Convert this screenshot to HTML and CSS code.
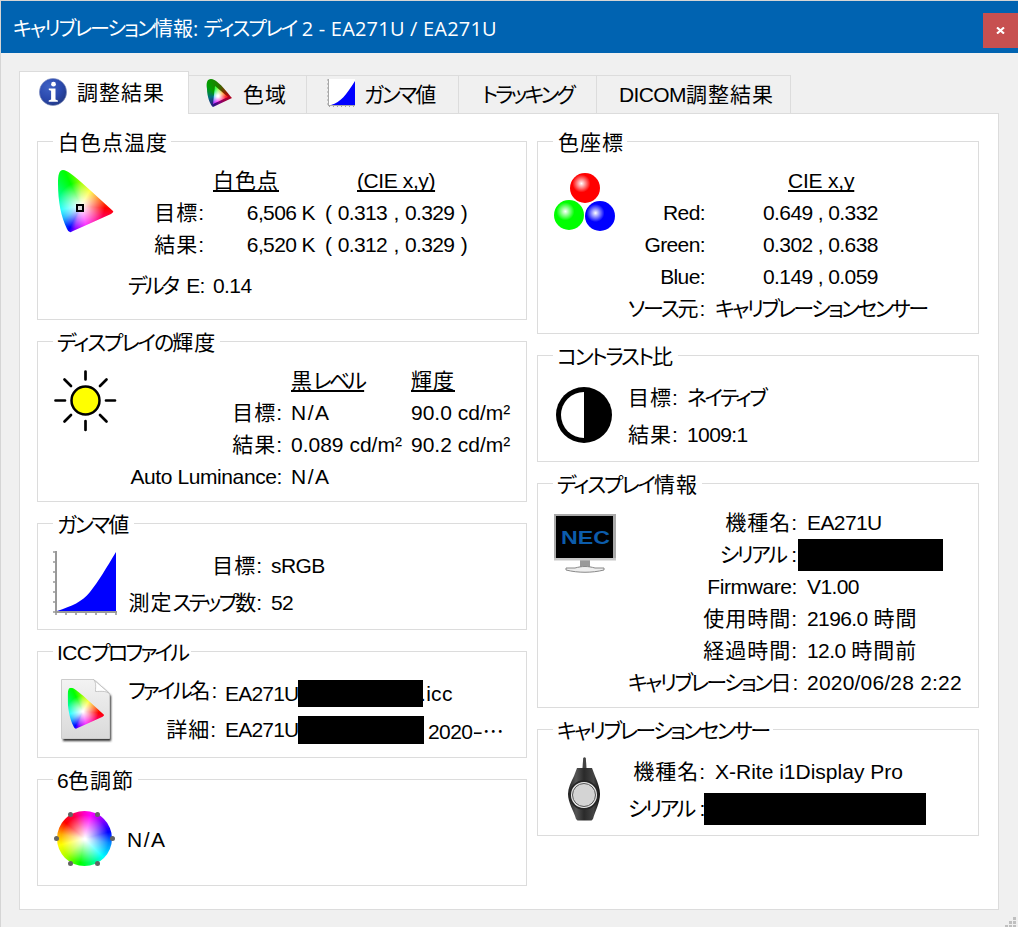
FILE: index.html
```html
<!DOCTYPE html>
<html lang="ja">
<head>
<meta charset="utf-8">
<title>キャリブレーション情報</title>
<link rel="stylesheet" href="styles.css">
</head>
<body>
<div class="window">
  <header class="titlebar">
    <h1><span class="tk">キャリブレーション</span>情報: <span class="tk">ディスプレイ</span><span class="tl"> 2 - EA271U / EA271U</span></h1>
    <button class="close" aria-label="閉じる"><svg width="9" height="7" viewBox="0 0 9 7"><path d="M1 .4 8 6.6M8 .4 1 6.6" stroke="#fff" stroke-width="2"/></svg></button>
  </header>

  <nav class="tabs">
    <div class="tab active">
      <svg class="tab-icon" width="28" height="28" viewBox="0 0 28 28">
        <defs><radialGradient id="info" cx=".35" cy=".3" r=".75"><stop offset="0" stop-color="#3f62c4"/><stop offset=".6" stop-color="#2b49ae"/><stop offset="1" stop-color="#223984"/></radialGradient></defs>
        <circle cx="14" cy="14" r="13.6" fill="url(#info)" stroke="#8793c0" stroke-width=".6"/>
        <circle cx="14.5" cy="6.2" r="2.4" fill="#fff"/>
        <path d="M9.8 10.5h6.7v11l2.4 1v1.300H9.700v-1.300l2.400-1v-8.800l-2.300-.8z" fill="#fff"/>
      </svg>
      <span class="j">調整結果</span>
    </div>
    <div class="tab t2">
      <div class="mini"><div class="mini-in"></div></div>
      <span class="j">色域</span>
    </div>
    <div class="tab t3">
      <svg class="tab-icon" width="28" height="28" viewBox="0 0 28 28">
        <path d="M2 0h26v26H2z" fill="#fff"/><path d="M4 26C14 23 19 16 28 2v24z" fill="#00f"/>
        <path d="M1.500 0v27M1 26.500h27" stroke="#a8a8a8"/><path d="M.5 .5v26M2 27.500h26" stroke="#a0a0a0" stroke-dasharray="1 3"/>
      </svg>
      <span><span class="k">ガンマ</span><span class="j">値</span></span>
    </div>
    <div class="tab t4"><span class="kt">トラッキング</span></div>
    <div class="tab t5"><span><span class="n">DICOM</span><span class="j">調整結果</span></span></div>
  </nav>

  <main class="panel">
    <div class="col left">
      <section class="group g-white">
        <h2 class="j">白色点温度</h2>
        <div class="content">
          <div class="icon"><div class="gamut"><div class="picker"></div></div></div>
          <div class="rows">
            <div class="row"><span class="label"></span><span class="c-temp u j">白色点</span><span class="c-head u">(CIE x,y)</span></div>
            <div class="row"><span class="label"><span class="j">目標</span>:</span><span class="c-temp right n">6,506 K</span><span class="c-xy n">( 0.313 , 0.329 )</span></div>
            <div class="row"><span class="label"><span class="j">結果</span>:</span><span class="c-temp right n">6,520 K</span><span class="c-xy n">( 0.312 , 0.329 )</span></div>
            <div class="row delta"><span class="label"><span class="kt">デルタ</span> <span class="n">E:</span></span><span class="n">0.14</span></div>
          </div>
        </div>
      </section>

      <section class="group g-lum">
        <h2><span class="k">ディスプレイの</span><span class="j">輝度</span></h2>
        <div class="content">
          <div class="icon">
            <svg width="90" height="90" viewBox="38 356 90 90" fill="none" stroke="#000" stroke-width="2.700" stroke-linecap="round">
              <circle cx="85.500" cy="400.500" r="14" fill="#ff0" stroke-width="2.500"/>
              <path d="M85.500 371.500v8M85.500 421v9M55.500 400.500h9.500M106 400.500h9M64.500 379.500l6.500 6.500M106.500 379.500l-6.500 6.500M64.500 421.500l6.500-6.500M106.500 421.500l-6.500-6.500"/>
            </svg>
          </div>
          <div class="rows">
            <div class="row"><span class="label"></span><span class="c-black"><span class="u"><span class="j">黒</span><span class="kt">レベル</span></span></span><span class="u j">輝度</span></div>
            <div class="row"><span class="label"><span class="j">目標</span>:</span><span class="c-black w">N/A</span><span>90.0 cd/m²</span></div>
            <div class="row"><span class="label"><span class="j">結果</span>:</span><span class="c-black">0.089 cd/m²</span><span>90.2 cd/m²</span></div>
            <div class="row"><span class="label fw">Auto Luminance:</span><span class="w">N/A</span></div>
          </div>
        </div>
      </section>

      <section class="group g-gamma">
        <h2><span class="k">ガンマ</span><span class="j">値</span></h2>
        <div class="content">
          <div class="icon">
            <svg width="90" height="90" viewBox="38 538 90 90">
              <path d="M57 611C72 606 82 602 90 592S107 567 116 552v59z" fill="#00f"/>
              <path d="M56 551v62M55 612h62" stroke="#999" stroke-width="2"/>
              <path d="M53 552h3M53 562h3M53 572h3M53 582h3M53 592h3M53 602h3M53 612h3M56 612v3M66 612v3M76 612v3M86 612v3M96 612v3M106 612v3M116 612v3" stroke="#999" stroke-width="1.600"/>
            </svg>
          </div>
          <div class="rows">
            <div class="row"><span class="label"><span class="j">目標</span>:</span><span class="n">sRGB</span></div>
            <div class="row"><span class="label"><span class="j">測定</span><span class="kt">ステップ</span><span>数</span>:</span><span class="n">52</span></div>
          </div>
        </div>
      </section>

      <section class="group g-icc">
        <h2><span class="n">ICC</span><span class="kt">プロファイル</span></h2>
        <div class="content">
          <div class="icon">
            <svg width="90" height="90" viewBox="38 666 90 90">
              <defs>
                <linearGradient id="page" x2="0" y2="1"><stop offset="0" stop-color="#f3f3f3"/><stop offset="1" stop-color="#d9d9d9"/></linearGradient>
                <filter id="soft" x="-20%" y="-20%" width="140%" height="140%"><feGaussianBlur stdDeviation=".8"/></filter>
              </defs>
              <path d="M63 682h32l16 14v45H63z" fill="#333" filter="url(#soft)"/>
              <path d="M61.500 679.500h32l16 14v45h-48z" fill="url(#page)" stroke="#ccc"/>
              <path d="M93.500 679.500l16 14c-4-3-9-2-14-2 0-5 1-9-2-12z" fill="#fff" stroke="#bbb" stroke-width=".8"/>
              <foreignObject x="67" y="687" width="57" height="65"><div class="gamut small"></div></foreignObject>
            </svg>
          </div>
          <div class="rows">
            <div class="row"><span class="label"><span class="kt">ファイル</span><span class="j">名</span>:</span><span class="val n">EA271U</span><span class="redact r1"></span><span class="ext">.icc</span></div>
            <div class="row"><span class="label"><span class="j">詳細</span>:</span><span class="val n">EA271U</span><span class="redact r2"></span><span class="year">2020<span class="dash">-</span><span class="dots">…</span></span></div>
          </div>
        </div>
      </section>

      <section class="group g-six">
        <h2><span class="n">6</span><span class="j">色調節</span></h2>
        <div class="content">
          <div class="icon">
            <svg width="90" height="90" viewBox="38 794 90 90">
              <foreignObject x="57" y="811" width="55" height="55"><div class="wheel"></div></foreignObject>
              <g fill="#646464"><circle cx="70.500" cy="814.500" r="2.500"/><circle cx="97.500" cy="814.500" r="2.500"/><circle cx="56.500" cy="838.500" r="2.500"/><circle cx="112.500" cy="838.500" r="2.500"/><circle cx="70.500" cy="863.500" r="2.500"/><circle cx="97.500" cy="863.500" r="2.500"/></g>
            </svg>
          </div>
          <div class="rows"><div class="row"><span class="w">N/A</span></div></div>
        </div>
      </section>
    </div>

    <div class="col rightcol">
      <section class="group g-coord">
        <h2 class="j">色座標</h2>
        <div class="content">
          <div class="icon">
            <svg width="90" height="90" viewBox="538 156 90 90">
              <defs>
                <radialGradient id="r" cx=".38" cy=".35" r=".3"><stop offset="0" stop-color="#fff"/><stop offset="1" stop-color="#f00"/></radialGradient>
                <radialGradient id="g" cx=".38" cy=".38" r=".3"><stop offset="0" stop-color="#fff"/><stop offset="1" stop-color="#0f0"/></radialGradient>
                <radialGradient id="b" cx=".35" cy=".4" r=".3"><stop offset="0" stop-color="#fff"/><stop offset="1" stop-color="#00f"/></radialGradient>
              </defs>
              <circle cx="585" cy="188" r="15" fill="url(#r)"/><circle cx="569" cy="215" r="15" fill="url(#g)"/><circle cx="600" cy="216" r="15" fill="url(#b)"/>
            </svg>
          </div>
          <div class="rows">
            <div class="row"><span class="label"></span><span class="c-coord"><span class="u">CIE x,y</span></span></div>
            <div class="row"><span class="label n">Red:</span><span class="c-coord n">0.649 , 0.332</span></div>
            <div class="row"><span class="label n">Green:</span><span class="c-coord n">0.302 , 0.638</span></div>
            <div class="row"><span class="label n">Blue:</span><span class="c-coord n">0.149 , 0.059</span></div>
            <div class="row"><span class="label"><span class="k">ソース</span><span class="j">元</span>:</span><span class="kk">キャリブレーションセンサー</span></div>
          </div>
        </div>
      </section>

      <section class="group g-contrast">
        <h2><span class="k">コントラスト</span><span class="j">比</span></h2>
        <div class="content">
          <div class="icon">
            <svg width="90" height="90" viewBox="538 370 90 90"><circle cx="584" cy="415" r="28"/><path d="M584 392a23 23 0 0 0 0 46z" fill="#fff"/></svg>
          </div>
          <div class="rows">
            <div class="row"><span class="label"><span class="j">目標</span>:</span><span class="kk">ネイティブ</span></div>
            <div class="row"><span class="label"><span class="j">結果</span>:</span><span class="n">1009:1</span></div>
          </div>
        </div>
      </section>

      <section class="group g-display">
        <h2><span class="k">ディスプレイ</span><span class="j">情報</span></h2>
        <div class="content">
          <div class="icon">
            <svg width="90" height="90" viewBox="538 498 90 90">
              <path d="M580 560h10v7h-10z" fill="#999"/>
              <path d="M566 568h9c7-2 13-2 20 0h9v2c-12 3-26 3-38 0z" fill="#eee" stroke="#888"/>
              <path d="M554 514h62v46h-62z" fill="#a9a9a9"/><path d="M554 558h62v2.500h-62z" fill="#c8c8c8"/><path d="M556 516h57v42h-57z"/>
              <text class="nec" x="561" y="544" textLength="49" lengthAdjust="spacingAndGlyphs">NEC</text>
            </svg>
          </div>
          <div class="rows">
            <div class="row"><span class="label"><span class="j">機種名</span>:</span><span class="n">EA271U</span></div>
            <div class="row"><span class="label"><span class="kk">シリアル</span> :</span><span class="redact r3"></span></div>
            <div class="row"><span class="label fw">Firmware:</span><span class="n">V1.00</span></div>
            <div class="row"><span class="label"><span class="j">使用時間</span>:</span><span><span class="n">2196.0</span> <span class="j">時間</span></span></div>
            <div class="row"><span class="label"><span class="j">経過時間</span>:</span><span><span class="n">12.0</span> <span class="j">時間前</span></span></div>
            <div class="row"><span class="label"><span class="kk">キャリブレーション</span><span class="j">日</span>:</span><span class="date">2020/06/28 2:22</span></div>
          </div>
        </div>
      </section>

      <section class="group g-sensor">
        <h2 class="kk">キャリブレーションセンサー</h2>
        <div class="content">
          <div class="icon">
            <svg width="90" height="90" viewBox="538 744 90 90">
              <defs><linearGradient id="body" x2="1"><stop offset="0" stop-color="#222"/><stop offset=".25" stop-color="#555"/><stop offset=".5" stop-color="#2a2a2a"/><stop offset=".8" stop-color="#444"/><stop offset="1" stop-color="#111"/></linearGradient></defs>
              <path d="M583.200 758q1.300-1.500 2.600 0l.8 11h-4.200z" fill="#444"/>
              <path d="M577 768h15l3 8c3 7 5 13 5 18 0 9-5 17-7 25l-1.500 1.500h-14L576 819c-2-8-8-16-8-25 0-6 3-12 6-18z" fill="url(#body)"/>
              <circle cx="584" cy="795" r="14.800" fill="#262626"/><circle cx="584" cy="795" r="13" fill="#eee"/><circle cx="584" cy="795" r="11.500" fill="#d4d4d4" stroke="#555" stroke-width="1"/>
            </svg>
          </div>
          <div class="rows">
            <div class="row"><span class="label"><span class="j">機種名</span>:</span><span class="model">X-Rite i1Display Pro</span></div>
            <div class="row"><span class="label"><span class="kk">シリアル</span> :</span><span class="redact r4"></span></div>
          </div>
        </div>
      </section>
    </div>
  </main>
  <svg class="grip" width="11" height="11" viewBox="0 0 11 11" fill="#bfbfbf"><path d="M8 0h3v3H8zM4 4h3v3H4zM8 4h3v3H8zM0 8h3v3H0zM4 8h3v3H4zM8 8h3v3H8z"/></svg>
</div>
</body>
</html>
```
FILE: styles.css
```css
* { box-sizing: border-box; }
body {
  margin: 0;
  font-family: "Liberation Sans", "Noto Sans CJK JP", sans-serif;
  font-size: 21px;
  font-feature-settings: "palt";
  color: #000;
}
.window {
  position: relative;
  width: 1018px;
  height: 927px;
  overflow: hidden;
  background: #f0f0f0;
  border-top: 1px solid #d5d5d5;
  border-left: 1px solid #d5d5d5;
}

/* Title bar */
.titlebar {
  display: flex;
  justify-content: space-between;
  height: 52px;
  background: #0063b1;
}
h1 {
  margin: 0;
  padding-left: 12px;
  font: 400 20px/55px "Open Sans", "Noto Sans CJK JP", sans-serif;
  font-feature-settings: "palt";
  color: #fff;
  white-space: pre;
}
.tk { letter-spacing: -1.9px; }
.tl { letter-spacing: .2px; }
.close {
  display: flex;
  align-items: center;
  justify-content: center;
  width: 35px;
  height: 35px;
  margin-top: 12px;
  padding: 0;
  border: 0;
  background: #c75050;
}

/* Letter spacing by script */
.j { letter-spacing: 1px; }
.k { letter-spacing: -2.1px; }
.kk { letter-spacing: -2.5px; }
.kt { letter-spacing: -2.8px; }
.n { letter-spacing: -.6px; }
.w { letter-spacing: 1.5px; }

/* Tabs */
.tabs {
  display: flex;
  align-items: flex-end;
  height: 61px;
  padding-left: 18px;
}
.tab {
  display: flex;
  align-items: center;
  height: 39px;
  border: 1px solid #dcdcdc;
  border-left: 0;
  line-height: 36px;
  white-space: nowrap;
}
.tab.active {
  z-index: 1;
  width: 170px;
  height: 43px;
  padding: 0 0 1px 19px;
  gap: 10px;
  border-left: 1px solid #dcdcdc;
  border-bottom: 0;
  background: #fff;
}
.tab.active .tab-icon { margin-top: -2px; }
.t2 { width: 118px; padding-left: 17px; gap: 11px; }
.t3 { width: 152px; padding-left: 20px; gap: 9px; }
.t3 .tab-icon { margin-top: -3px; }
.t4 { width: 138px; padding-left: 23px; }
.t5 { width: 194px; padding-left: 22px; }
.mini {
  width: 26px;
  height: 28px;
  margin-top: -3px;
  clip-path: path("M1 10C0 4 1 0 5 0C9 0 15 5 25 18L26 19L7 28C4 26 1 17 1 10Z");
  background: conic-gradient(from 0deg at 11px 17px, #208000, #902000 70deg, #b00020 95deg, #800080 160deg, #301080 195deg, #007080 260deg, #00a000 320deg, #208000);
}
.mini-in {
  width: 26px;
  height: 28px;
  clip-path: path("M9 7L22 18L7 25Z");
  background: radial-gradient(circle at 12px 17px, #fff 1px, transparent 8px), conic-gradient(from 0deg at 12px 17px, #8f4, #f80 60deg, #f22 95deg, #f0f 190deg, #0af 260deg, #0f4 330deg, #8f4);
}

/* Panel and groups */
.panel {
  display: flex;
  gap: 10px;
  width: 980px;
  height: 797px;
  margin: -1px 0 0 18px;
  padding: 27px 0 0 17px;
  border: 1px solid #dcdcdc;
  background: #fff;
}
.col { display: flex; flex-direction: column; gap: 21px; }
.left { width: 490px; }
.rightcol { width: 442px; }
.group { border: 1px solid #dcdcdc; }
h2 {
  width: fit-content;
  height: 28px;
  margin: -14px 0 0 15px;
  padding: 0 4px;
  background: #fff;
  font-size: 21px;
  font-weight: 400;
  line-height: 29px;
  white-space: nowrap;
}
h2.j { padding: 0 3px 0 5px; }
.content { display: flex; }
.icon { width: 90px; height: 90px; flex: none; }
.icon svg { display: block; }
.row {
  display: flex;
  height: 32px;
  line-height: 32px;
  white-space: pre;
}
.label { flex: none; margin-right: 9px; text-align: right; }
.rightcol .label { margin-right: 10px; }
.u {
  text-decoration: underline;
  text-decoration-thickness: 2px;
  text-underline-offset: 2px;
  text-decoration-skip-ink: none;
}
.redact { flex: none; background: #000; }

.g-white { height: 179px; }
.g-white .rows { padding-top: 9px; }
.g-white .label { width: 76px; }
.c-temp { width: 102px; margin-right: 10px; }
.c-temp.right { text-align: right; }
.c-head { margin-left: 32px; letter-spacing: -.4px; }
.g-white .u.j { width: auto; margin-right: 46px; }
.c-xy { word-spacing: 1px; }
.delta { margin-top: 9px; }
.delta .label { word-spacing: 3px; }

.g-lum { height: 161px; }
.g-lum .rows { padding-top: 9px; }
.g-lum .label { width: 154px; }
.c-black { width: 120px; }

.g-gamma { height: 107px; }
.g-gamma .rows { padding-top: 12px; }
.g-gamma .label { width: 134px; }
.g-gamma .row { height: 37px; }

.g-icc { height: 107px; }
.g-icc .rows { padding-top: 9px; }
.g-icc .row { height: 38px; }
.g-icc .label { width: 88px; }
.g-icc .val { width: 73px; line-height: 37px; }
.g-icc .val.n { letter-spacing: -.8px; }
.r1 { width: 125px; height: 27px; margin-top: 5px; }
.r2 { width: 126px; height: 28px; margin-top: 3px; }
.ext { margin-left: -3px; line-height: 37px; letter-spacing: .3px; }
.year { margin-left: 4px; line-height: 37px; letter-spacing: -.6px; }
.g-icc .row + .row span { line-height: 34px; }
.dash { display: inline-block; transform: scaleX(1.5); margin: 0 2px; }
.dots { font-family: "Noto Sans CJK JP", sans-serif; font-feature-settings: normal; }

.g-six { height: 107px; }
.g-six .rows { padding-top: 30px; margin-left: -1px; }

.g-coord { height: 193px; }
.g-coord .rows { padding-top: 9px; }
.g-coord .label { width: 77px; }
.c-coord { width: 212px; padding-left: 48px; }
.g-coord .u { margin-left: 25px; letter-spacing: -.2px; }

.g-contrast { height: 107px; }
.g-contrast .rows { padding-top: 12px; }
.g-contrast .label { width: 49px; }
.g-contrast .row { height: 37px; }

.g-display { height: 225px; }
.g-display .rows { padding-top: 9px; }
.g-display .label { width: 169px; }
.fw { letter-spacing: -.4px; }
.r3 { width: 145px; height: 32px; margin-left: -9px; }
.date { letter-spacing: .2px; }
.nec { font: 700 19px "Liberation Sans", sans-serif; fill: #0c5cab; }

.g-sensor { height: 107px; }
.g-sensor .rows { padding-top: 12px; }
.g-sensor .row { height: 37px; }
.g-sensor .label { width: 77px; }
.r4 { width: 222px; height: 32px; margin-left: -11px; }

/* Icons built from gradients */
.gamut {
  width: 57px;
  height: 65px;
  margin: 13px 0 0 19px;
  overflow: hidden;
  clip-path: path("M1 15C1 6 2 1 6 1C10 1 16 6 24 13L56 42Q57 43 54 45L16 62Q12 65 10 60C4 48 1 32 1 15Z");
  background:
    radial-gradient(circle at 24px 37px, #fff 1px, transparent 24px),
    conic-gradient(from 0deg at 24px 37px, #a0ff00 0deg, #ff0 30deg, #f80 60deg, #f00 95deg, #f06 120deg, #f0f 165deg, #80f 195deg, #00f 207deg, #0af 235deg, #0ff 260deg, #00ff80 300deg, #0f0 335deg, #a0ff00 360deg);
}
.gamut.small { margin: 0; transform: scale(.66); transform-origin: 0 0; }
.picker {
  width: 8px;
  height: 8px;
  margin: 35px 0 0 19px;
  border: 2px solid #000;
  background: #ddd;
}
.wheel {
  width: 55px;
  height: 55px;
  border-radius: 50%;
  background:
    radial-gradient(circle at 28px 28px, #fff 1px, transparent 24px),
    conic-gradient(from 0deg, #f0c, #f0f 15deg, #80f 45deg, #00f 75deg, #08f 100deg, #0ff 135deg, #0f8 160deg, #0f0 190deg, #af0 225deg, #ff0 255deg, #fa0 280deg, #f00 310deg, #f04 335deg, #f0c);
}

.grip { position: absolute; right: 2px; bottom: -1px; }
```
